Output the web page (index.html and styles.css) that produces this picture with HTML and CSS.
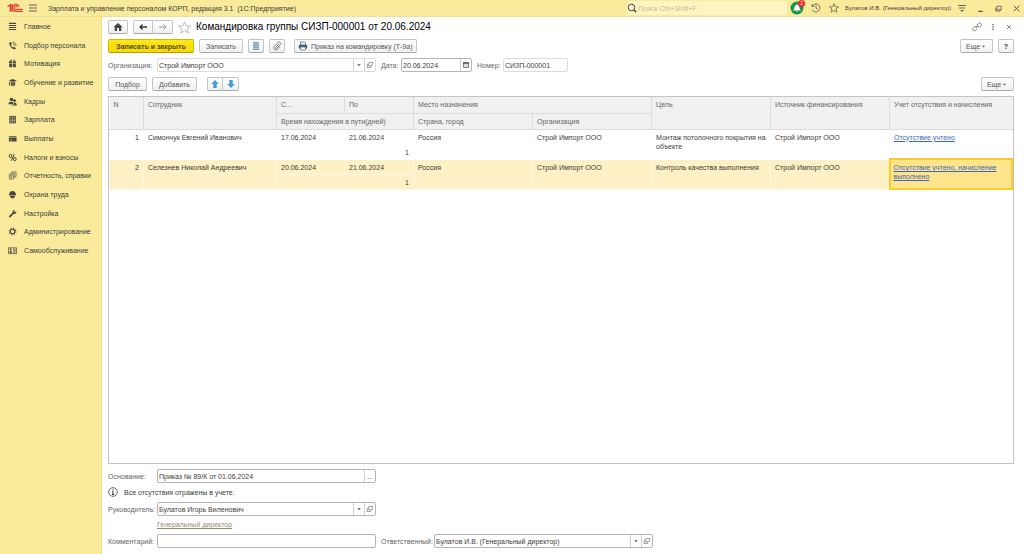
FILE: index.html
```html
<!DOCTYPE html>
<html lang="ru">
<head>
<meta charset="utf-8">
<title>Зарплата и управление персоналом КОРП</title>
<link rel="stylesheet" href="styles.css">
</head>
<body>
<svg class="sprite" aria-hidden="true">
  <symbol id="open" viewBox="0 0 8 8"><path d="M3 1.500h3.800L6 4.800H2.500zM2.300 3H1.500L1 6.500h3.500l.3-1.500" fill="none" stroke="#777" stroke-width=".7"/></symbol>
  <symbol id="caret" viewBox="0 0 8 8"><path d="M2.300 3.200h3.400L4 5.200z" fill="#555"/></symbol>
  <symbol id="star" viewBox="0 0 14 14"><path d="M7 1l1.700 4.200 4.600.3-3.500 2.900 1.100 4.400L7 10.400l-3.900 2.400 1.100-4.400L.7 5.500l4.600-.3z" fill="none" stroke="currentColor"/></symbol>
</svg>
<div class="app">
<header class="topbar">
  <svg class="logo" viewBox="0 0 16 10"><g fill="none" stroke="#e2402f"><path d="M.5 3.800L3.400 1.800V8.800M4.900 1V8.800" stroke-width="1.300"/><path d="M12 3.500A3.400 3.400 0 1 0 9 8.300H15.800" stroke-width="1.200"/><path d="M10.300 4.200A1.600 1.600 0 1 0 9 6.400H15.800" stroke-width="1.100"/></g></svg>
  <button class="plain menu" aria-label="Меню"><svg viewBox="0 0 10 10"><path d="M1 2h8M1 5h8M1 8h8" stroke="#555" stroke-width=".9"/></svg></button>
  <span class="app-name">Зарплата и управление персоналом КОРП, редакция 3.1&nbsp; (1С:Предприятие)</span>
  <label class="search"><svg viewBox="0 0 10 10"><circle cx="4.500" cy="4.500" r="3.300" fill="none" stroke="#444"/><path d="M7 7l2.200 2.200" stroke="#444" stroke-width="1.300"/></svg><input type="search" placeholder="Поиск Ctrl+Shift+F" aria-label="Поиск"></label>
  <button class="plain bell" aria-label="Оповещения"><svg viewBox="0 0 14 14"><circle cx="7" cy="7" r="6.500" fill="#12964a"/><path d="M3 9.500C4.800 8 4.300 3.500 7 3.500S9.200 8 11 9.500zM6 10.300h2l-1 1z" fill="#fff"/></svg><span class="badge">1</span></button>
  <button class="plain" aria-label="История"><svg viewBox="0 0 10 10"><path d="M1.300 3.200A4 4 0 1 1 1.200 6.500M1 1.200V3.500H3.300M5 2.500V5.300L6.800 6.500" fill="none" stroke="#555" stroke-width=".8"/></svg></button>
  <button class="plain fav" aria-label="Избранное"><svg><use href="#star"/></svg></button>
  <span class="user">Булатов И.В. (Генеральный директор)</span>
  <button class="plain" aria-label="Настройки"><svg viewBox="0 0 10 10"><path d="M1 2.500h8M2 5h6" stroke="#555" stroke-width=".9"/><path d="M3.300 7h3.400L5 9z" fill="#555"/></svg></button>
  <button class="plain win" aria-label="Свернуть"><svg viewBox="0 0 8 8"><path d="M2 6.500h4" stroke="#444"/></svg></button>
  <button class="plain win" aria-label="Развернуть"><svg viewBox="0 0 8 8"><path d="M2.500 2h4v3h-4zM1.500 3.300v3h4V5.200" fill="none" stroke="#555" stroke-width=".7"/></svg></button>
  <button class="plain win" aria-label="Закрыть"><svg viewBox="0 0 8 8"><path d="M1.500 1.500l5 5M6.500 1.500l-5 5" stroke="#444" stroke-width=".8"/></svg></button>
</header>
<div class="body">
<nav class="side"><ul>
  <li><a href="#"><svg viewBox="0 0 10 10"><path d="M1 1.500h8M1 3.800h8M1 6.100h8M1 8.400h8" stroke="#4a4740" stroke-width="1.200"/></svg>Главное</a></li>
  <li><a href="#"><svg viewBox="0 0 10 10"><path d="M1.500 1.500L3 1l1.200 2.200-1 1c.4 1.500 1.300 2.500 2.600 3l1-.8L8.800 8 8 9.300C4.500 9.500 1 5.500 1.500 1.500z"/><path d="M5 1.200A4 4 0 0 1 8.900 5.500M5 3A2.300 2.300 0 0 1 7.200 5.300" fill="none" stroke="#4a4740" stroke-width=".8"/></svg>Подбор персонала</a></li>
  <li><a href="#"><svg viewBox="0 0 10 10"><path d="M1 2.500h3.600v2H1zM5.400 2.500H9v2H5.400zM1.300 5h3.300v4.300H1.300zM5.400 5h3.300v4.300H5.400zM2 .8h2.200L4.600 2H2.500zM5.800.8H8L7.500 2H5.400z"/></svg>Мотивация</a></li>
  <li><a href="#"><svg viewBox="0 0 10 10"><path d="M1 3l4-1.800L10 3 5.500 4.500zM3 4.500l2.500.9L8 4.500V7.500H3zM1.300 3.500H2V8.500H1z"/><path d="M3.500 8.500h4" stroke="#4a4740"/></svg>Обучение и развитие</a></li>
  <li><a href="#"><svg viewBox="0 0 10 10"><circle cx="3.800" cy="2.800" r="2"/><circle cx="7.200" cy="4" r="1.600"/><path d="M.5 8C.5 6 1.500 5.200 3.800 5.200S6 6 6 8zM6.500 6C8.800 5.800 9.800 7 9.800 9.500H4V8.600h2.800c0-1.300 0-2-.3-2.600z"/></svg>Кадры</a></li>
  <li><a href="#"><svg viewBox="0 0 10 10"><path d="M1.500 1h7.200v8.300H1.500z"/><path d="M2.500 2.500h5.200M2.500 4.600h5.200M2.500 6.200h5.200M2.500 7.800h5.200" stroke="#f9eb9b" stroke-width=".8" stroke-dasharray="1.400 .5"/></svg>Зарплата</a></li>
  <li><a href="#"><svg viewBox="0 0 10 10"><path d="M1 2.500h8.500v1.300H1zM1 4.500h8.500v3.800H1z"/><path d="M2 6.800h3" stroke="#f9eb9b" stroke-width=".7"/></svg>Выплаты</a></li>
  <li><a href="#"><svg viewBox="0 0 10 10"><g fill="none" stroke="#4a4740" stroke-width="1.100"><ellipse cx="2.800" cy="3.300" rx="1.500" ry="1.900"/><ellipse cx="7.600" cy="6.800" rx="1.500" ry="1.900"/><path d="M7 1.200L3.500 8.800"/></g></svg>Налоги и взносы</a></li>
  <li><a href="#"><svg viewBox="0 0 10 10"><path d="M1.500 3.500h4.500v5.500H1.500zM3 3.300V2.200h4.700V7.500H6.200M4.500 2V1H9v5.300H7.800M2.500 5h2.500M2.500 6.300h2.500M2.500 7.600h2" fill="none" stroke="#666050" stroke-width=".8"/></svg>Отчетность, справки</a></li>
  <li><a href="#"><svg viewBox="0 0 10 10"><path d="M1.200 5C1.500 2.500 3 1.200 5 1.200S8.500 2.500 8.800 5l.5.8H.7zM2 6.300h6C7.600 8.300 6.500 9.300 5 9.300S2.400 8.300 2 6.300z"/></svg>Охрана труда</a></li>
  <li><a href="#"><svg viewBox="0 0 10 10"><path d="M1.200 7.700L5 4.200C4.600 2.300 6 .8 8 1L6.700 2.500 7.500 3.600 9.300 2.500C9.500 4.600 8 6 6.200 5.500L2.700 9.200C1.700 9.800.5 8.700 1.200 7.700z"/></svg>Настройка</a></li>
  <li><a href="#"><svg viewBox="0 0 10 10"><g fill="none" stroke="#4a4740"><circle cx="5" cy="5" r="2.500" stroke-width="1.200"/><circle cx="5" cy="5" r="3.700" stroke-width="1.300" stroke-dasharray="1.300 1.600"/></g></svg>Администрирование</a></li>
  <li><a href="#"><svg viewBox="0 0 10 10"><path d="M.5 2h9v6.500h-9z" fill="none" stroke="#4a4740" stroke-width=".8"/><circle cx="3" cy="4" r="1.100"/><path d="M1.300 7.500c0-2.600 3.400-2.600 3.400 0z"/><path d="M5.700 3.500h2.800M5.700 5.200h2.800M5.700 6.900h2.800" stroke="#4a4740" stroke-width=".9"/></svg>Самообслуживание</a></li>
</ul></nav>
<main class="main">
  <div class="row title-row">
    <button class="btn home" aria-label="Начальная страница"><svg viewBox="0 0 10 10"><path d="M5 1l4.500 4H8.300v4H6V6H4v3H1.700V5H.5z" fill="#444"/></svg></button>
    <div class="group"><button class="btn" aria-label="Назад"><svg viewBox="0 0 10 10"><path d="M9 5H2M4.500 2.500L2 5l2.500 2.500" fill="none" stroke="#333" stroke-width="1.300"/></svg></button><button class="btn" aria-label="Вперед"><svg viewBox="0 0 10 10"><path d="M1 5h7M5.500 2.500L8 5 5.500 7.500" fill="none" stroke="#999"/></svg></button></div>
    <button class="plain mark" aria-label="В избранное"><svg><use href="#star"/></svg></button>
    <h1>Командировка группы СИЗП-000001 от 20.06.2024</h1>
    <div class="form-tools">
      <button class="plain" aria-label="Ссылка"><svg viewBox="0 0 10 10"><g fill="none" stroke="#777" stroke-width=".9"><path d="M5 3l1.500-1.500a1.700 1.700 0 0 1 2.400 2.400L7.300 5.500M5 7L3.500 8.500A1.700 1.700 0 0 1 1.100 6.100L2.800 4.500H4.500V6M5.300 2.800V4.500H7"/></g></svg></button>
      <button class="plain" aria-label="Действия"><svg viewBox="0 0 10 10"><path d="M5 2v1.300M5 4.400v1.300M5 6.800v1.300" stroke="#555" stroke-width="1.300"/></svg></button>
      <button class="plain" aria-label="Закрыть форму"><svg viewBox="0 0 10 10"><path d="M3 3l4 4M7 3L3 7" stroke="#666" stroke-width=".8"/></svg></button>
    </div>
  </div>
  <div class="row toolbar">
    <button class="btn primary">Записать и закрыть</button>
    <button class="btn save">Записать</button>
    <button class="btn square" aria-label="Список"><svg viewBox="0 0 10 10"><path d="M2 1h6v8H2z" fill="#a9c3d6"/><path d="M2 1.500h6M2 3.800h6M2 6.100h6M2 8.500h6" stroke="#6f97b5" stroke-width=".8"/></svg></button>
    <button class="btn square" aria-label="Вложения"><svg viewBox="0 0 10 10"><path d="M7 3L3.700 6.300a.7.700 0 0 0 1 1L8.300 3.700A1.600 1.600 0 0 0 6 1.400L2.200 5.300a2.200 2.200 0 0 0 3 3.200L8 5.800" fill="none" stroke="#666" stroke-width=".8"/></svg></button>
    <button class="btn print"><svg viewBox="0 0 10 10"><path d="M2.500 1h4l1 1v2h-5z" fill="#fff" stroke="#557" stroke-width=".7"/><path d="M.8 3.800h8.400v3.700H.8z" fill="#3f6a8c"/><path d="M2.500 6h5v3h-5z" fill="#fff" stroke="#3f6a8c" stroke-width=".7"/></svg>Приказ на командировку (Т-9а)</button>
    <button class="btn more">Еще <svg><use href="#caret"/></svg></button>
    <button class="btn help">?</button>
  </div>
  <div class="row line">
    <label class="first" for="org">Организация:</label>
    <div class="field long pale"><input id="org" value="Строй Импорт ООО"><button aria-label="Выбрать"><svg><use href="#caret"/></svg></button><button aria-label="Открыть"><svg><use href="#open"/></svg></button></div>
    <label for="date">Дата:</label>
    <div class="field date"><input id="date" value="20.06.2024"><button aria-label="Календарь"><svg viewBox="0 0 8 8"><path d="M1.500 1.500h5v5h-5z" fill="#ddd" stroke="#666" stroke-width=".8"/><path d="M1.200 2h5.600" stroke="#555" stroke-width="1.500"/></svg></button></div>
    <label for="num">Номер:</label>
    <div class="field num pale"><input id="num" value="СИЗП-000001"></div>
  </div>
  <div class="row toolbar list-tools">
    <button class="btn pick">Подбор</button>
    <button class="btn add">Добавить</button>
    <div class="group arrows"><button class="btn" aria-label="Вверх"><svg viewBox="0 0 10 10"><path d="M5 1l3.700 4H6.700v4H3.300V5H1.300z" fill="#3ba0dc"/></svg></button><button class="btn" aria-label="Вниз"><svg viewBox="0 0 10 10"><path d="M5 9L1.300 5h2V1h3.400v4h2z" fill="#3ba0dc"/></svg></button></div>
    <button class="btn more">Еще <svg><use href="#caret"/></svg></button>
  </div>
  <div class="grid-box">
    <table>
      <colgroup><col class="c-n"><col class="c-emp"><col class="c-from"><col class="c-to"><col class="c-std"><col class="c-std"><col class="c-std"><col class="c-std"><col></colgroup>
      <thead>
        <tr><th rowspan="2">N</th><th rowspan="2">Сотрудник</th><th>С...</th><th>По</th><th colspan="2">Место назначения</th><th rowspan="2">Цель</th><th rowspan="2">Источник финансирования</th><th rowspan="2">Учет отсутствия и начисления</th></tr>
        <tr><th colspan="2">Время нахождения в пути(дней)</th><th>Страна, город</th><th>Организация</th></tr>
      </thead>
      <tbody>
        <tr><td rowspan="2" class="r">1</td><td rowspan="2">Симончук Евгений Иванович</td><td>17.06.2024</td><td>21.06.2024</td><td rowspan="2">Россия</td><td rowspan="2">Строй Импорт ООО</td><td rowspan="2">Монтаж потолочного покрытия на объекте</td><td rowspan="2">Строй Импорт ООО</td><td rowspan="2"><a href="#">Отсутствие учтено</a></td></tr>
        <tr><td colspan="2" class="r">1</td></tr>
      </tbody>
      <tbody class="selected">
        <tr><td rowspan="2" class="r">2</td><td rowspan="2">Селезнев Николай Андреевич</td><td>20.06.2024</td><td>21.06.2024</td><td rowspan="2">Россия</td><td rowspan="2">Строй Импорт ООО</td><td rowspan="2">Контроль качества выполнения</td><td rowspan="2">Строй Импорт ООО</td><td rowspan="2" class="current"><a href="#">Отсутствие учтено, начисление выполнено</a></td></tr>
        <tr><td colspan="2" class="r">1</td></tr>
      </tbody>
    </table>
  </div>
  <div class="row line base">
    <label class="first" for="base">Основание:</label>
    <div class="field long"><input id="base" value="Приказ № 89/К от 01.06.2024"><button aria-label="Выбрать">...</button></div>
  </div>
  <p class="info"><svg viewBox="0 0 10 10"><circle cx="5" cy="5" r="4.300" fill="none" stroke="#444" stroke-width=".8"/><path d="M5 2.200v1.200M4.200 4.500H5V7.500M4 7.500h2" fill="none" stroke="#333"/></svg>Все отсутствия отражены в учете.</p>
  <div class="row line">
    <label class="first" for="head">Руководитель:</label>
    <div class="field long"><input id="head" value="Булатов Игорь Виленович"><button aria-label="Выбрать"><svg><use href="#caret"/></svg></button><button aria-label="Открыть"><svg><use href="#open"/></svg></button></div>
  </div>
  <a class="post" href="#">Генеральный директор</a>
  <div class="row line">
    <label class="first" for="comment">Комментарий:</label>
    <div class="field long"><input id="comment"></div>
    <label class="resp" for="resp">Ответственный:</label>
    <div class="field long"><input id="resp" value="Булатов И.В. (Генеральный директор)"><button aria-label="Выбрать"><svg><use href="#caret"/></svg></button><button aria-label="Открыть"><svg><use href="#open"/></svg></button></div>
  </div>
</main>
</div>
</div>
</body>
</html>
```
FILE: styles.css
```css
* { box-sizing: border-box; }
body {
  margin: 0;
  font: 7px/9px "Liberation Sans", Arial, sans-serif;
  color: #3c3c3c;
  background: #fff;
}
button, input { font: inherit; color: inherit; margin: 0; padding: 0; }
svg { display: block; flex: none; width: 10px; height: 10px; }
.sprite { position: absolute; width: 0; height: 0; }
.app { display: flex; flex-direction: column; height: 100vh; }
.plain { border: 0; background: none; display: flex; align-items: center; justify-content: center; flex: none; color: #555; }

.topbar {
  display: flex;
  align-items: center;
  height: 17px;
  flex: none;
  padding: 0 3px 0 7px;
  background: #f9eb9b;
  border-bottom: 1px solid #eddf93;
}
.logo { width: 16px; }
.menu { margin: 0 10px 0 5px; }
.app-name { flex: 1; }
.search { display: flex; align-items: center; width: 160px; height: 14px; background: #fdf4c2; border-radius: 2px; margin-right: 3px; }
.search input { flex: 1; min-width: 0; border: 0; background: none; outline: 0; padding-left: 1px; }
.search input::placeholder { color: #c4bc98; opacity: 1; }
.bell { position: relative; margin-right: 7px; }
.bell svg { width: 14px; height: 14px; }
.badge { position: absolute; top: -1px; right: -1px; width: 7px; height: 7px; border-radius: 50%; background: #f22; color: #fff; font-size: 6px; line-height: 7px; }
.fav { margin: 0 6px 0 8px; }
.user { font-size: 6px; margin-right: 6px; }
.win { margin-left: 9px; }
.win svg { width: 9px; height: 9px; }

.body { display: flex; flex: 1; min-height: 0; }
.side { width: 102px; flex: none; background: #f9eb9b; border-right: 1px solid #eddc8c; }
.side ul { list-style: none; margin: 0; padding: 0; height: 243px; display: grid; grid-auto-rows: 1fr; }
.side li { display: flex; }
.side a { display: flex; align-items: center; gap: 7px; padding-left: 8px; color: inherit; text-decoration: none; white-space: nowrap; }
.side svg { width: 9px; height: 9px; fill: #4a4740; }

.main { flex: 1; min-width: 0; display: flex; flex-direction: column; padding: 3px 10px 6px 6px; }
.row { display: flex; align-items: center; flex: none; }
.btn {
  display: flex;
  align-items: center;
  justify-content: center;
  height: 14px;
  border: 1px solid #c4c4c4;
  border-bottom-color: #aaa;
  border-radius: 2px;
  background: linear-gradient(#fff, #f0f0f0);
  color: #555;
  white-space: nowrap;
}
.group { display: flex; }
.group .btn { width: 20px; }
.group .btn:first-child { border-radius: 2px 0 0 2px; }
.group .btn:last-child { border-left: 0; border-radius: 0 2px 2px 0; }
.home { width: 20px; margin-right: 5px; }
.mark { margin: 0 5px; color: #b5b5b5; }
.mark svg { width: 13px; height: 13px; }
h1 { flex: 1; margin: 0; font-size: 10px; line-height: 14px; font-weight: 400; color: #000; }
.form-tools { display: flex; gap: 6px; }

.toolbar { gap: 5px; margin-top: 5px; }
.primary { width: 86px; background: linear-gradient(#ffe71a, #f8d800); border-color: #d5b800; border-bottom-color: #b89c00; font-weight: 700; color: #534a10; }
.save { width: 44px; }
.square { width: 16px; }
.print { gap: 3px; padding: 0 4px 0 3px; margin-left: 4px; }
.more { width: 33px; margin-left: auto; }
.more svg { width: 7px; height: 7px; }
.help { width: 16px; font-weight: 700; color: #333; }
.pick { width: 39px; }
.add { width: 45px; }
.list-tools { margin: 5px 0; }
.arrows { margin-left: 5px; }
.arrows .btn { width: 16px; }

.line { gap: 5px; }
.toolbar + .line { margin-top: 5px; }
.line label { width: 20px; white-space: nowrap; color: #666; margin-right: -5px; }
.line label[for="num"] { width: 26px; }
.line .first { width: 49px; }
.line .resp { width: 53px; }
.field { display: flex; height: 14px; border: 1px solid #b5b5b5; border-radius: 2px; background: #fff; }
.pale { border-color: #dcdcdc; }
.field input { flex: 1; min-width: 0; width: 0; border: 0; padding: 0 1px; background: none; outline: 0; }
.field button { width: 11px; border: 0; border-left: 1px solid #d0d0d0; background: none; display: flex; align-items: center; justify-content: center; color: #555; }
.field button svg { width: 8px; height: 8px; }
.long { width: 219px; }
.date { width: 71px; }
.num { width: 65px; }

.grid-box { flex: 1; min-height: 0; border: 1px solid #c4c4c4; }
table { width: 100%; border-collapse: collapse; table-layout: fixed; }
.c-n { width: 34px; }
.c-emp { width: 133px; }
.c-from { width: 68px; }
.c-to { width: 69px; }
.c-std { width: 119px; }
th { height: 16px; padding: 3px 4px; text-align: left; vertical-align: top; font-weight: 400; color: #666; background: #f1f1f1; border: 1px solid #dcdcdc; border-top: 0; }
th:first-child { border-left: 0; }
th:last-child { border-right-color: #f1f1f1; }
thead tr + tr th { border-top: 1px solid #dcdcdc; border-right-color: #dcdcdc; }
td { height: 15px; padding: 3px 4px 2px; vertical-align: top; border: 1px solid #fff; }
thead + tbody tr:first-child td { border-top-color: #dcdcdc; }
.r { text-align: right; }
.selected td { background: #fdf0c4; border: 1px solid #fff8e2; }
.selected .current { background: #fee48d; border: 2px solid #fccb2e; padding-left: 3px; }
td a { color: #3a68b8; text-decoration: underline; }

.base { margin-top: 5px; }
.info { display: flex; align-items: center; gap: 6px; margin: 4px 0 5px; height: 10px; }
.post { align-self: flex-start; margin: 4px 0 5px 49px; color: #948c6c; }
```
